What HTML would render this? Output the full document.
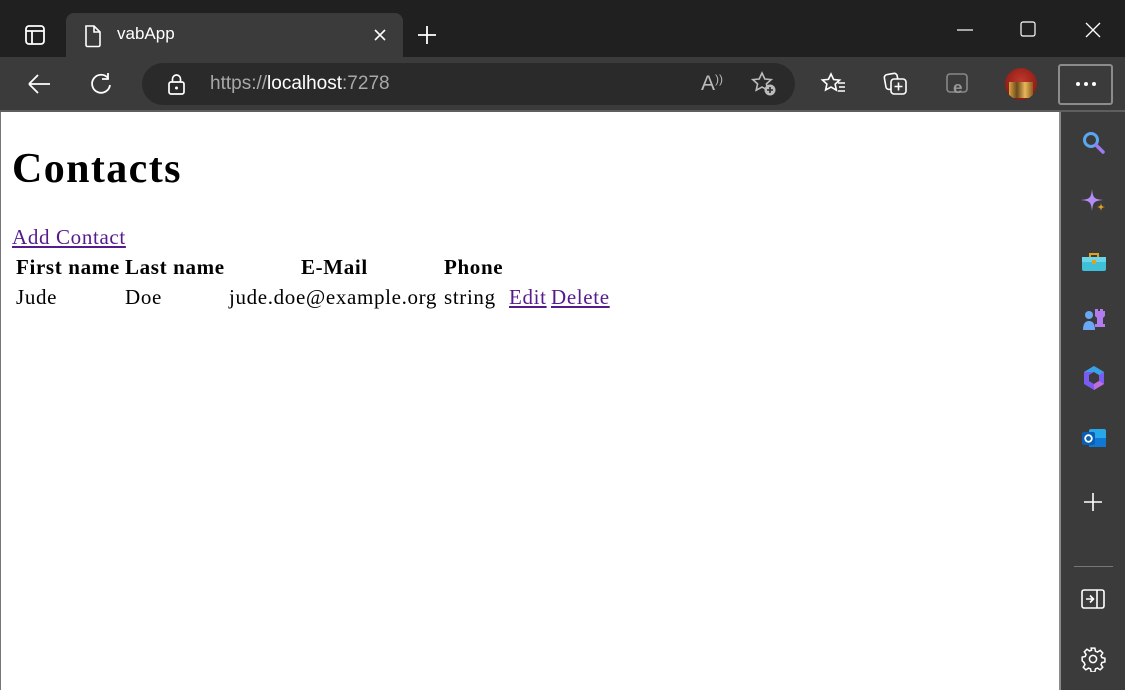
<!DOCTYPE html>
<html><head><meta charset="utf-8"><style>
*{margin:0;padding:0;box-sizing:border-box}
body{width:1125px;height:690px;overflow:hidden;background:#202020;position:relative;font-family:"Liberation Sans",sans-serif}
.abs{position:absolute}
.tab{left:66px;top:13px;width:337px;height:45px;background:#3b3b3b;border-radius:8px 8px 0 0}
.toolbar{left:0;top:57px;width:1125px;height:54px;background:#3b3b3b}
.addr{left:142px;top:63px;width:653px;height:42px;background:#2a2a2a;border-radius:21px}
.line{left:0;top:110px;width:1125px;height:2px;background:#5e5e5e}
.page{left:1px;top:112px;width:1058px;height:578px;background:#fff;font-family:"Liberation Serif",serif;color:#000}
.leftb{left:0;top:112px;width:1px;height:578px;background:#777}
.side{left:1059px;top:112px;width:66px;height:578px;background:#3b3b3b;border-left:2px solid #8a8a8a}
.t{font-size:21px;letter-spacing:0.65px;position:absolute;white-space:nowrap}
.b{font-weight:bold}
a{color:#551a8b;text-decoration:underline}
</style></head><body>
<div class="abs tab"></div>
<div class="abs toolbar"></div>
<div class="abs addr"></div>
<div class="abs line"></div>
<svg class="abs" style="left:24px;top:24px" width="22" height="22" viewBox="0 0 22 22"><rect x="2" y="2" width="18" height="18" rx="3" fill="none" stroke="#fff" stroke-width="1.8"/><line x1="2" y1="7" x2="20" y2="7" stroke="#fff" stroke-width="1.8"/><line x1="8" y1="7" x2="8" y2="20" stroke="#fff" stroke-width="1.8"/></svg>
<svg class="abs" style="left:82px;top:24px" width="22" height="24" viewBox="0 0 22 24"><path d="M4 2h8l6 6v13a1.5 1.5 0 0 1-1.5 1.5h-11A1.5 1.5 0 0 1 4 21z M12 2v6h6" fill="none" stroke="#fff" stroke-width="1.6"/></svg>
<div class="abs" style="left:117px;top:24px;color:#fff;font-size:17px">vabApp</div>
<svg class="abs" style="left:373px;top:28px" width="14" height="14" viewBox="0 0 14 14"><path d="M2 2L12 12M12 2L2 12" stroke="#fff" stroke-width="1.6"/></svg>
<svg class="abs" style="left:416px;top:24px" width="22" height="22" viewBox="0 0 22 22"><path d="M11 2V20M2 11H20" stroke="#fff" stroke-width="1.8"/></svg>
<svg class="abs" style="left:955px;top:20px" width="20" height="20"><path d="M2 10H18" stroke="#fff" stroke-width="1.2"/></svg>
<svg class="abs" style="left:1019px;top:20px" width="18" height="18"><rect x="2" y="2" width="14" height="14" rx="2" fill="none" stroke="#fff" stroke-width="1.2"/></svg>
<svg class="abs" style="left:1084px;top:21px" width="18" height="18"><path d="M2 2L16 16M16 2L2 16" stroke="#fff" stroke-width="1.3"/></svg>
<svg class="abs" style="left:26px;top:72px" width="26" height="24"><path d="M3 12H24M3 12L12 3M3 12L12 21" fill="none" stroke="#fff" stroke-width="1.8"/></svg>
<svg class="abs" style="left:89px;top:72px" width="24" height="24" viewBox="0 0 24 24"><path d="M19 6A9 9 0 1 0 21 13" fill="none" stroke="#fff" stroke-width="1.8"/><path d="M19 1V7H13" fill="none" stroke="#fff" stroke-width="1.8"/></svg>
<svg class="abs" style="left:166px;top:73px" width="22" height="24"><rect x="3" y="9" width="15" height="12" rx="2" fill="none" stroke="#fff" stroke-width="1.7"/><path d="M6.5 9V6a4 4 0 0 1 8 0v3" fill="none" stroke="#fff" stroke-width="1.7"/><circle cx="10.5" cy="15" r="1.5" fill="#fff"/></svg>
<div class="abs" style="left:210px;top:73px;font-size:19px;color:#a8a8a8">https://<span style="color:#fff">localhost</span>:7278</div>
<div class="abs" style="left:701px;top:72px;font-size:21px;color:#bbb">A<span style="font-size:12px;vertical-align:top">))</span></div>
<svg class="abs" style="left:750px;top:70px" width="28" height="28" viewBox="0 0 28 28"><path d="M12 3l2.8 6 6.4.6-4.8 4.3 1.4 6.3L12 17l-5.8 3.2 1.4-6.3L2.8 9.6l6.4-.6z" fill="none" stroke="#bbb" stroke-width="1.6"/><circle cx="20" cy="20" r="5.5" fill="#bbb"/><path d="M20 17v6M17 20h6" stroke="#2a2a2a" stroke-width="1.6"/></svg>
<svg class="abs" style="left:820px;top:70px" width="28" height="28" viewBox="0 0 28 28"><path d="M11 4l2.6 5.5 6 .6-4.5 4 1.3 6L11 17l-5.4 3 1.3-6-4.5-4 6-.6z" fill="none" stroke="#fff" stroke-width="1.6"/><path d="M18 13h7M19 17h6M18 21h7" stroke="#fff" stroke-width="1.5"/></svg>
<svg class="abs" style="left:882px;top:70px" width="28" height="28" viewBox="0 0 28 28"><rect x="3" y="4" width="13" height="15" rx="3" fill="none" stroke="#fff" stroke-width="1.6" transform="rotate(-10 9 11)"/><rect x="9" y="9" width="15" height="15" rx="3" fill="#3b3b3b" stroke="#fff" stroke-width="1.6"/><path d="M16.5 12.5v8M12.5 16.5h8" stroke="#fff" stroke-width="1.6"/></svg>
<svg class="abs" style="left:944px;top:70px" width="28" height="28" viewBox="0 0 28 28"><rect x="3" y="4" width="20" height="18" rx="3" fill="none" stroke="#888" stroke-width="1.6"/><text x="9" y="23" font-size="17" font-weight="bold" fill="#999" font-family="Liberation Sans">e</text></svg>
<div class="abs" style="left:1005px;top:68px;width:32px;height:32px;border-radius:50%;background:radial-gradient(circle at 50% 40%,#c0392b,#7a1010);overflow:hidden"><div style="position:absolute;left:4px;top:14px;width:24px;height:16px;background:linear-gradient(90deg,#d9a441,#6b4a1c,#e8b85a,#8a5a20)"></div></div>
<div class="abs" style="left:1058px;top:64px;width:55px;height:41px;border:2px solid #8c8c8c;border-radius:3px"></div>
<svg class="abs" style="left:1074px;top:80px" width="24" height="8"><circle cx="4" cy="4" r="2" fill="#fff"/><circle cx="12" cy="4" r="2" fill="#fff"/><circle cx="20" cy="4" r="2" fill="#fff"/></svg>

<div class="abs page">
 <div class="t b" style="left:11px;top:33px;font-size:42px;letter-spacing:1.4px">Contacts</div>
 <div class="t" style="left:11px;top:113px"><a>Add Contact</a></div>
 <div class="t b" style="left:15px;top:143px">First name</div>
 <div class="t b" style="left:124px;top:143px">Last name</div>
 <div class="t b" style="left:300px;top:143px">E-Mail</div>
 <div class="t b" style="left:443px;top:143px">Phone</div>
 <div class="t" style="left:15px;top:173px">Jude</div>
 <div class="t" style="left:124px;top:173px">Doe</div>
 <div class="t" style="left:228px;top:173px">jude.doe@example.org</div>
 <div class="t" style="left:443px;top:173px">string</div>
 <div class="t" style="left:508px;top:173px"><a>Edit</a></div>
 <div class="t" style="left:550px;top:173px"><a>Delete</a></div>
</div>
<div class="abs leftb"></div>
<div class="abs side"></div>
<svg class="abs" style="left:1081px;top:130px" width="26" height="26"><circle cx="10" cy="10" r="6.5" fill="none" stroke="#5aa7f0" stroke-width="3"/><path d="M15 15l7 7" stroke="#9b7cf0" stroke-width="3.5" stroke-linecap="round"/></svg>
<svg class="abs" style="left:1080px;top:188px" width="28" height="28" viewBox="0 0 28 28"><path d="M12 1C13 10 14 11 23 12 14 13 13 14 12 23 11 14 10 13 1 12 10 11 11 10 12 1z" fill="#b48cf5"/><path d="M21 15c.5 3 1 3.5 4 4-3 .5-3.5 1-4 4-.5-3-1-3.5-4-4 3-.5 3.5-1 4-4z" fill="#e0a020"/></svg>
<svg class="abs" style="left:1080px;top:249px" width="28" height="26"><rect x="2" y="8" width="24" height="14" rx="2" fill="#3fc0d8"/><rect x="2" y="8" width="24" height="5" fill="#6ad6e8"/><path d="M10 8V5h8v3" fill="none" stroke="#e0a020" stroke-width="2"/><rect x="12" y="11" width="4" height="4" fill="#e0a020"/></svg>
<svg class="abs" style="left:1080px;top:305px" width="28" height="28"><circle cx="9" cy="10" r="4" fill="#6aa8f5"/><path d="M3 25c0-6 2-9 6-9s6 3 6 9z" fill="#6aa8f5"/><path d="M15 4h3v2h2V4h3v2h2v-2h0v7l-2 2v6h2v3H15v-3h2v-6l-2-2z" fill="#b07cf0"/></svg>
<svg class="abs" style="left:1080px;top:364px" width="28" height="28"><path d="M14 2l10 6v12l-10 6-10-6V8z" fill="#7a5cf0"/><path d="M14 8l5 3v6l-5 3-5-3v-6z" fill="#3b3b3b"/><path d="M4 8l10-6 10 6-5 3-5-3z" fill="#3aa0e8"/><path d="M24 20l-10 6v-6l5-3z" fill="#c06ce0"/></svg>
<svg class="abs" style="left:1080px;top:424px" width="28" height="28"><rect x="9" y="5" width="17" height="18" rx="2" fill="#28a8ea"/><rect x="9" y="14" width="17" height="9" fill="#0f78d4"/><rect x="2" y="8" width="13" height="13" rx="2" fill="#0a5fb4"/><circle cx="8.5" cy="14.5" r="3.3" fill="none" stroke="#fff" stroke-width="1.8"/></svg>
<svg class="abs" style="left:1082px;top:491px" width="22" height="22"><path d="M11 2V20M2 11H20" stroke="#fff" stroke-width="1.6"/></svg>
<div class="abs" style="left:1074px;top:566px;width:39px;height:1px;background:#777"></div>
<svg class="abs" style="left:1080px;top:588px" width="26" height="22"><rect x="2" y="2" width="22" height="18" rx="2" fill="none" stroke="#fff" stroke-width="1.6"/><path d="M17 2v18" stroke="#fff" stroke-width="1.6"/><path d="M6 11h7M10 7.5l3.5 3.5L10 14.5" fill="none" stroke="#fff" stroke-width="1.6"/></svg>
<svg class="abs" style="left:1080px;top:646px" width="26" height="26" viewBox="0 0 24 24"><path d="M10.3 2h3.4l.6 2.8 1.9.8 2.4-1.6 2.4 2.4-1.6 2.4.8 1.9 2.8.6v3.4l-2.8.6-.8 1.9 1.6 2.4-2.4 2.4-2.4-1.6-1.9.8-.6 2.8h-3.4l-.6-2.8-1.9-.8-2.4 1.6-2.4-2.4 1.6-2.4-.8-1.9L2 13.7v-3.4l2.8-.6.8-1.9L4 5.4 6.4 3l2.4 1.6 1.9-.8z" fill="none" stroke="#fff" stroke-width="1.4"/><circle cx="12" cy="12" r="3.3" fill="none" stroke="#fff" stroke-width="1.4"/></svg>
</body></html>
